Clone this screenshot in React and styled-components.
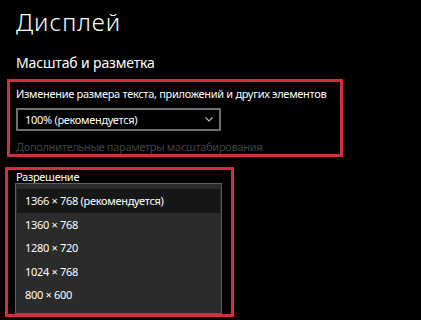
import styled, { createGlobalStyle } from "styled-components";

const GlobalStyle = createGlobalStyle`
    body {
        margin: 0;
        background: #000000;
        font-family: "Noto Sans", "Open Sans", sans-serif;
        color: #FFFFFF;
    }
`

const resolutions = [
    "1366 × 768 (рекомендуется)",
    "1360 × 768",
    "1280 × 720",
    "1024 × 768",
    "800 × 600",
];

export default function App() {
    return (
        <Page>
            <GlobalStyle />
            <Title>Дисплей</Title>
            <Heading>Масштаб и разметка</Heading>

            <Frame width={336} left={7} gap={6} padTop={5}>
                <Label>Изменение размера текста, приложений и других элементов</Label>
                <Select>
                    <span>100% (рекомендуется)</span>
                    <svg width="8" height="5" viewBox="0 0 8 5">
                        <path d="M0.5 0.5 L4 4 L7.5 0.5" fill="none" stroke="#BDBDBD" strokeWidth="1.1" />
                    </svg>
                </Select>
                <Link>Дополнительные параметры масштабирования</Link>
            </Frame>

            <Frame width={229} left={5} gap={10} padTop={0}>
                <Label>Разрешение</Label>
                <List>
                    {resolutions.map((item, index) => (
                        <Option key={index} selected={index === 0}>{item}</Option>
                    ))}
                </List>
            </Frame>
        </Page>
    )
}

const Page = styled.div`
    width: 421px;
    height: 320px;
    overflow: hidden;
    display: flex;
    flex-direction: column;
`

const Title = styled.h1`
    margin: 8px 0 0 16px;
    font-size: 24px;
    font-weight: 300;
    line-height: 28px;
    letter-spacing: 1px;
`

const Heading = styled.h2`
    margin: 17px 0 0 16px;
    font-size: 14px;
    font-weight: 400;
    line-height: 20px;
    letter-spacing: -0.15px;
`

const Frame = styled.div`
    box-sizing: border-box;
    width: ${props => props.width}px;
    margin: ${props => props.gap}px 0 0 ${props => props.left}px;
    border: 3px solid #D2303C;
    padding: ${props => props.padTop}px 0 0 ${props => 16 - props.left - 3}px;
    display: flex;
    flex-direction: column;
`

const Label = styled.div`
    font-size: 11px;
    line-height: 13px;
    letter-spacing: -0.3px;
    white-space: nowrap;
    color: #FFFFFF;
`

const Select = styled.div`
    box-sizing: border-box;
    width: 205px;
    height: 23px;
    margin-top: 8px;
    border: 2px solid #6E6E6E;
    padding: 0 6px 0 7px;
    display: flex;
    align-items: center;
    justify-content: space-between;
    font-size: 11px;
    letter-spacing: -0.3px;
    color: #FFFFFF;
`

const Link = styled.div`
    margin-top: 8px;
    font-size: 11px;
    line-height: 15px;
    letter-spacing: -0.3px;
    white-space: nowrap;
    color: #434343;
`

const List = styled.div`
    box-sizing: border-box;
    width: 207px;
    margin-left: -1px;
    border: 1px solid #5E5E5E;
    background: #2B2B2B;
    padding: 5px 1px 6px;
    display: flex;
    flex-direction: column;
`

const Option = styled.div`
    height: 23.5px;
    padding-left: 8px;
    display: flex;
    align-items: center;
    font-size: 11px;
    letter-spacing: -0.3px;
    color: #FFFFFF;
    background: ${props => props.selected ? "#171717" : "transparent"};
`
